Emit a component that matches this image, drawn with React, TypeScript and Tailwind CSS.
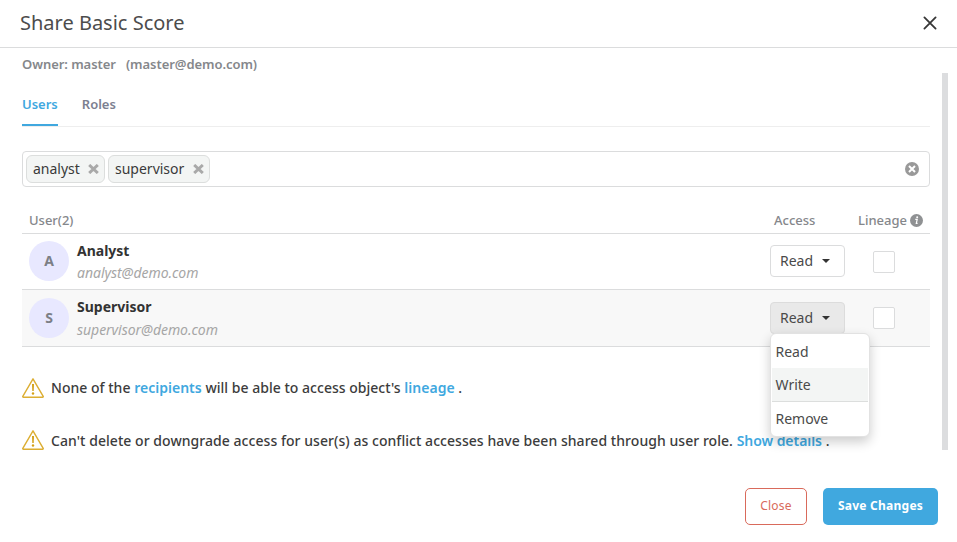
import React from "react";

function CloseIcon() {
  return (
    <svg className="-mt-0.5" width="14" height="14" viewBox="0 0 14 14" fill="none" stroke="#363636" strokeWidth="1.8" strokeLinecap="round">
      <path d="M1.4 1.4 12.6 12.6M12.6 1.4 1.4 12.6" />
    </svg>
  );
}

function TagRemoveIcon() {
  return (
    <svg width="11" height="10" viewBox="0 0 11 10" stroke="#a9a9a9" strokeWidth="3">
      <path d="M1.2 1 9.8 9M9.8 1 1.2 9" />
    </svg>
  );
}

function ClearIcon() {
  return (
    <svg className="-mt-px" width="15" height="15" viewBox="0 0 15 15">
      <circle cx="8" cy="8" r="7" fill="#999" />
      <path d="M5 5 11 11M11 5 5 11" stroke="#fff" strokeWidth="2" />
    </svg>
  );
}

function InfoIcon() {
  return (
    <svg width="13" height="13" viewBox="0 0 13 13">
      <circle cx="6.5" cy="6.5" r="6.5" fill="#8f9193" />
      <circle cx="7.2" cy="3.3" r="1" fill="#fff" />
      <path d="M5.3 5.4H7.2L6.3 9.4H7.6" fill="none" stroke="#fff" strokeWidth="1.2" />
    </svg>
  );
}

function WarningIcon() {
  return (
    <svg className="shrink-0" width="22" height="20" viewBox="0 0 22 20" fill="none">
      <path d="M11 .8 21.2 18.3Q21.5 19.2 20.6 19.2H1.4Q.5 19.2.8 18.3Z" stroke="#dcae33" strokeWidth="1.4" strokeLinejoin="round" />
      <path d="M10 6h2l-.3 7h-1.4Z" fill="#d4a017" />
      <circle cx="11" cy="15.5" r="1.2" fill="#d4a017" />
    </svg>
  );
}

function Tag({ label }: { label: string }) {
  return (
    <span className="flex h-7 items-center justify-between rounded-md border border-[#dcdedd] bg-[#f3f5f4] pr-[5px] pl-1.5 text-sm text-[#3a3a3a]">
      {label}
      <TagRemoveIcon />
    </span>
  );
}

function AccessMenu() {
  return (
    <div className="absolute top-[31px] left-0 z-10 h-[104px] w-[100px] rounded-md border border-[#e2e2e2] bg-white px-px text-sm tracking-[-0.05px] text-[#4a4a4a] shadow-[0_5px_12px_rgba(0,0,0,0.2)]">
      <div className="flex h-[34px] items-center pt-0.5 pl-[3.6px]">Read</div>
      <div className="flex h-[34px] items-center border-b border-[#dcdedd] bg-[#f3f5f4] pl-[3.6px]">Write</div>
      <div className="flex h-[33px] items-center pl-[3.6px]">Remove</div>
    </div>
  );
}

function UserRow({ name, email, open = false }: { name: string; email: string; open?: boolean }) {
  return (
    <div className={open ? "flex h-[57px] border-b border-[#dbdcdd] bg-[#f8f8f8] pt-2 pl-[7px]" : "flex h-14 border-b border-[#dbdcdd] pt-[7px] pl-[7px]"}>
      <div className="flex size-10 items-center justify-center rounded-full bg-[#e8e8ff] text-sm font-bold text-[#7c7f86]">{name[0]}</div>
      <div className={open ? "-mt-0.5 ml-2 w-[693px] text-sm leading-[22px]" : "-mt-px ml-2 w-[693px] text-sm leading-[22px]"}>
        <div className="font-bold text-[#333]">{name}</div>
        <div className={open ? "mt-px tracking-[-0.04px] text-[#a6a6a6] italic" : "tracking-[-0.04px] text-[#a6a6a6] italic"}>{email}</div>
      </div>
      <div className="relative mt-1 h-8 w-[75px]">
        <button className={open ? "flex h-8 w-[75px] items-center rounded border border-[#dcdcdc] bg-[#e9e9e9] pl-[9px] text-sm text-[#4a4a4a]" : "flex h-8 w-[75px] items-center rounded border border-[#dbdcdd] bg-white pl-[9px] text-sm text-[#4a4a4a]"}>
          Read
          <svg className="ml-[9px]" width="8" height="4" viewBox="0 0 8 4"><path d="M0 0h8L4 4Z" fill="#333" /></svg>
        </button>
        {open && <AccessMenu />}
      </div>
      <div className={open ? "mt-[9px] ml-7 size-[22px] rounded-xs border border-[#dbdcdd] bg-white" : "mt-2.5 ml-7 size-[22px] rounded-xs border border-[#dbdcdd] bg-white"} />
    </div>
  );
}

export default function App() {
  return (
    <div className="flex h-[542px] w-[957px] flex-col overflow-hidden bg-white font-['Noto_Sans',sans-serif] text-[#333]">
      <header className="flex h-12 shrink-0 items-center justify-between border-b border-[#dbdcdd] pr-5 pl-5">
        <h1 className="pb-0.5 text-xl leading-[44px] text-[#4c4c4c]">Share Basic Score</h1>
        <CloseIcon />
      </header>
      <div className="flex h-[402px] shrink-0">
        <main className="ml-[22px] w-[908px]">
          <div className="flex h-8 items-center gap-2.5 pt-0.5 text-[13px] font-semibold tracking-[-0.05px] text-[#85878b]">
            <span>Owner: master</span>
            <span>(master@demo.com)</span>
          </div>
          <nav className="flex h-[47px] gap-6 border-b border-[#eee] text-[13px] font-semibold text-[#7c8090]">
            <div className="h-[46px] border-b-2 border-[#40a8df] pt-[15px] text-[#40a8df]">Users</div>
            <div className="pt-[15px]">Roles</div>
          </nav>
          <div className="mt-6 flex h-9 items-center gap-[3px] rounded border border-[#dbdcdd] pr-2.5 pl-[3px]">
            <div className="flex w-[79px] *:w-full"><Tag label="analyst" /></div>
            <div className="flex w-[102px] *:w-full"><Tag label="supervisor" /></div>
            <div className="ml-auto"><ClearIcon /></div>
          </div>
          <div className="mt-[19px] flex h-7 items-center border-b border-[#dbdcdd] pt-0.5 pl-[7px] text-[13px] font-medium text-[#85878b]">
            <span className="w-[745px]">User(2)</span>
            <span className="w-[84px]">Access</span>
            <span className="mr-[3px]">Lineage</span>
            <InfoIcon />
          </div>
          <UserRow name="Analyst" email="analyst@demo.com" />
          <UserRow name="Supervisor" email="supervisor@demo.com" open />
          <div className="mt-[31px] flex h-5 items-center gap-[7px] text-sm font-medium tracking-[0.02px] text-[#3c3c3c]">
            <WarningIcon />
            <p>None of the <a className="font-semibold text-[#40a8df]">recipients</a> will be able to access object's <a className="font-semibold text-[#40a8df]">lineage</a> .</p>
          </div>
          <div className="mt-8 flex h-5 items-center gap-[7px] text-sm font-medium tracking-[0.05px] whitespace-nowrap text-[#3c3c3c]">
            <WarningIcon />
            <p className="pt-0.5">Can't delete or downgrade access for user(s) as conflict accesses have been shared through user role. <a className="font-semibold tracking-[-0.05px] text-[#40a8df]">Show details</a> .</p>
          </div>
        </main>
        <div className="mt-[25px] ml-3 w-1.5 bg-[#dcdddf]" />
      </div>
      <footer className="mt-[38px] flex h-[37px] shrink-0 justify-end gap-4 pr-[19px] text-xs tracking-[0.25px]">
        <button className="w-[62px] rounded-[5px] border border-[#d96a5b] pb-0.5 text-[#d96a5b]">Close</button>
        <button className="w-[115px] rounded-[5px] bg-[#40a8df] pb-0.5 font-bold text-white">Save Changes</button>
      </footer>
    </div>
  );
}
